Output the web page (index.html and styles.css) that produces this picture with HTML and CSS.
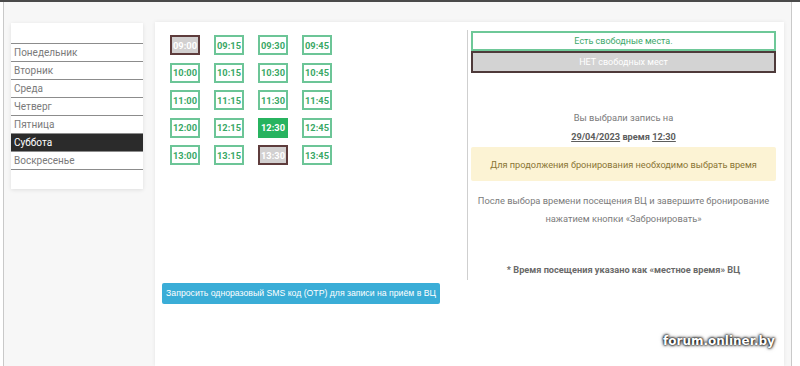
FILE: index.html
```html
<!DOCTYPE html>
<html lang="ru">
<head>
<meta charset="utf-8">
<title>Запись</title>
<link rel="stylesheet" href="styles.css">
</head>
<body>
<div class="topbar"></div>
<div class="frame">
  <aside class="days">
    <ul class="day-list">
      <li>Понедельник</li>
      <li>Вторник</li>
      <li>Среда</li>
      <li>Четверг</li>
      <li>Пятница</li>
      <li class="active">Суббота</li>
      <li>Воскресенье</li>
    </ul>
  </aside>
  <main class="card">
    <div class="top-row">
      <div class="slots-col">
        <div class="slots">
          <span class="slot busy">09:00</span>
          <span class="slot">09:15</span>
          <span class="slot">09:30</span>
          <span class="slot">09:45</span>
          <span class="slot">10:00</span>
          <span class="slot">10:15</span>
          <span class="slot">10:30</span>
          <span class="slot">10:45</span>
          <span class="slot">11:00</span>
          <span class="slot">11:15</span>
          <span class="slot">11:30</span>
          <span class="slot">11:45</span>
          <span class="slot">12:00</span>
          <span class="slot">12:15</span>
          <span class="slot selected">12:30</span>
          <span class="slot">12:45</span>
          <span class="slot">13:00</span>
          <span class="slot">13:15</span>
          <span class="slot busy">13:30</span>
          <span class="slot">13:45</span>
        </div>
      </div>
      <div class="info">
        <div class="legend free">Есть свободные места.</div>
        <div class="legend none">НЕТ свободных мест</div>
        <p class="chosen">Вы выбрали запись на</p>
        <p class="chosen-date"><u>29/04/2023</u> время <u>12:30</u></p>
        <div class="warning">Для продолжения бронирования необходимо выбрать время</div>
        <p class="hint">После выбора времени посещения ВЦ и завершите бронирование<br>нажатием кнопки «Забронировать»</p>
        <p class="note">* Время посещения указано как «местное время» ВЦ</p>
      </div>
    </div>
    <div class="actions">
      <button class="otp-btn" type="button">Запросить одноразовый SMS код (OTP) для записи на приём в ВЦ</button>
    </div>
  </main>
</div>
<div class="watermark">forum.onliner.by</div>
</body>
</html>
```

FILE: styles.css
```css
* { box-sizing: border-box; }
html, body {
  margin: 0;
  padding: 0;
  background: #ffffff;
  height: 366px;
  overflow: hidden;
  font-family: Roboto, "Liberation Sans", Arial, sans-serif;
}
.topbar {
  height: 2px;
  background: #4a4a4a;
}
.frame {
  margin-left: 3px;
  width: 789px;
  height: 364px;
  border-left: 1px solid #c9c9c9;
  border-right: 1px solid #c9c9c9;
  background: #f7f7f7;
  display: flex;
  align-items: flex-start;
  padding: 20px 7px 0 7px;
  gap: 12px;
}
.days {
  width: 132px;
  margin-top: 1px;
  background: #ffffff;
  box-shadow: 0 1px 4px rgba(0,0,0,0.10);
  padding: 20px 0 19px;
}
.day-list {
  list-style: none;
  margin: 0;
  padding: 0;
  border-top: 1px solid #8c8c8c;
}
.day-list li {
  height: 18px;
  line-height: 17px;
  border-bottom: 1px solid #8c8c8c;
  padding-left: 3px;
  font-size: 10px;
  color: #7a7a7a;
}
.day-list li.active {
  background: #2b2b2b;
  color: #ffffff;
}
.card {
  width: 629px;
  height: 344px;
  background: #ffffff;
  box-shadow: 0 0 4px rgba(0,0,0,0.08);
  padding-right: 5px;
}
.top-row {
  display: flex;
  height: 258px;
}
.slots-col {
  width: 312px;
  padding: 13px 0 0 15px;
}
.slots {
  display: grid;
  grid-template-columns: repeat(4, 30px);
  grid-auto-rows: 20px;
  column-gap: 14px;
  row-gap: 7.5px;
}
.slot {
  display: flex;
  align-items: center;
  justify-content: center;
  border: 2px solid #6cc597;
  color: #3aa866;
  font-weight: 700;
  font-size: 9.3px;
  background: #ffffff;
}
.slot.selected {
  background: #27b35f;
  border-color: #27b35f;
  color: #ffffff;
}
.slot.busy {
  background: #d2d0d0;
  border-color: #5e3c3c;
  color: #ffffff;
}
.info {
  width: 312px;
  margin-top: 8px;
  height: 250px;
  border-left: 1px solid #cfcfcf;
  padding: 1px 3px 0;
  text-align: center;
  font-size: 9.3px;
  color: #7b7b7b;
}
.legend {
  height: 20px;
  display: flex;
  align-items: center;
  justify-content: center;
  font-size: 9px;
}
.legend.free {
  border: 2px solid #6ec898;
  color: #3da86a;
}
.legend.none {
  height: 22px;
  background: #d3d3d3;
  border: 2px solid #4e3a3a;
  color: #ffffff;
}
.info p { margin: 0; white-space: nowrap; }
.chosen {
  margin-top: 36px !important;
  line-height: 18px;
  font-size: 9.3px;
}
.chosen-date {
  line-height: 18px;
  margin-top: 1px !important;
  font-weight: 700;
  color: #5d5d5d;
  font-size: 9.2px;
}
.warning {
  margin-top: 1px;
  height: 34px;
  background: #fcf3d4;
  color: #8a7535;
  display: flex;
  align-items: center;
  justify-content: center;
  font-size: 9.2px;
  border-radius: 2px;
}
.hint {
  margin-top: 11px !important;
  line-height: 18px;
  font-size: 9.3px;
}
.note {
  margin-top: 33px !important;
  line-height: 18px;
  font-weight: 700;
  color: #6a6a6a;
  font-size: 9.2px;
}
.actions {
  padding: 1px 0 0 7px;
}
.otp-btn {
  width: 278px;
  height: 21px;
  padding: 0;
  border: none;
  border-radius: 2px;
  background: #3aadd7;
  color: #ffffff;
  font-family: "Liberation Sans", Arial, sans-serif;
  font-size: 8.7px;
}
.watermark {
  position: absolute;
  left: 663px;
  top: 334px;
  font-family: "DejaVu Sans", sans-serif;
  font-weight: 700;
  font-size: 12px;
  color: #ffffff;
  text-shadow: 0 0 3px #000, 0 0 2px #000, 0 0 4px rgba(0,0,0,0.6);
}
```
